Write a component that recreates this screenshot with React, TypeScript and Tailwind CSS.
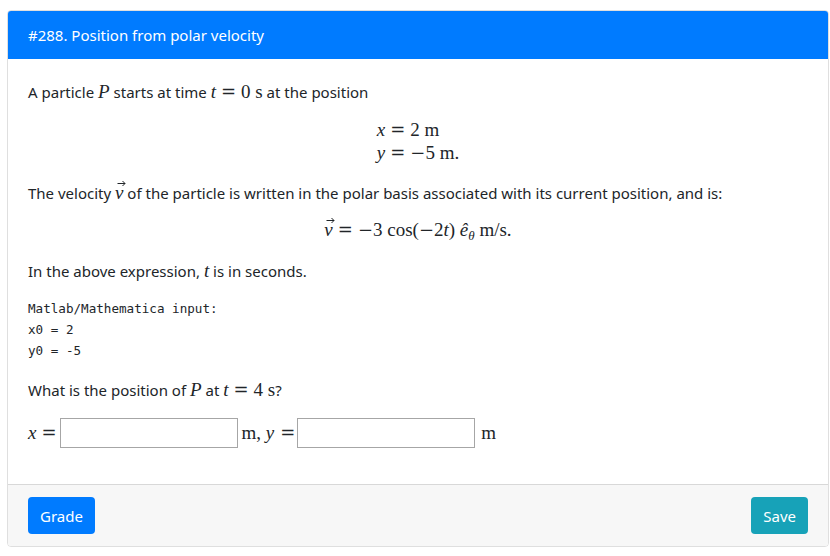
import React from 'react';

// math helpers, KaTeX-ish look with a serif face
const Math: React.FC<{ children: React.ReactNode; className?: string }> = ({ children, className = '' }) => (
  <span className={`font-['Liberation_Serif',serif] text-[19px] whitespace-nowrap ${className}`}>{children}</span>
);

const V: React.FC<{ children: React.ReactNode }> = ({ children }) => <i className="italic">{children}</i>;

// wide KaTeX style operators
const Op: React.FC<{ children: React.ReactNode; className?: string }> = ({ children, className = '' }) => (
  <span className={`font-['DejaVu_Serif',serif] text-[18px] ${className}`}>{children}</span>
);

const Vec: React.FC<{ children: React.ReactNode }> = ({ children }) => (
  <span className="relative inline-block">
    <i>{children}</i>
    <svg className="absolute left-[2px] top-[-1px] w-[9px] h-[6px]" viewBox="0 0 9 6" fill="none" stroke="#212529" strokeWidth="1">
      <path d="M0.5 3.5 L8 3.5 M5.5 1 L8 3.5 L5.5 6" />
    </svg>
  </span>
);

const Eq = () => <Op className="mx-[5px]">=</Op>;

export default function App() {
  return (
    <div className="min-h-screen bg-white pt-[10px] pl-[7px] pr-[1px] font-['Noto_Sans','Open_Sans',sans-serif] text-[#212529]">
      <div className="flex flex-col rounded-[4px] border border-black/[0.125] overflow-hidden">
        {/* header */}
        <div className="bg-[#007bff] px-5 py-3 text-[15px] leading-6 text-white">#288. Position from polar velocity</div>

        {/* body */}
        <div className="px-5 pt-[21px] pb-5 text-[15px] leading-6">
          <p className="mb-4 h-6">
            A particle <Math><V>P</V></Math> starts at time <Math><V>t</V><Eq />0 s</Math> at the position
          </p>

          <div className="mt-[-2px] mb-[17px] flex justify-center">
            <div className="grid grid-cols-[auto_auto] grid-rows-[23px_23px] items-center">
              <Math className="text-right"><V>x</V></Math>
              <Math><Eq />2 m</Math>
              <Math className="text-right"><V>y</V></Math>
              <Math><Eq /><Op>−</Op>5 m.</Math>
            </div>
          </div>

          <p className="mb-[14px] h-6">
            The velocity <Math><Vec>v</Vec></Math> of the particle is written in the polar basis associated with its current position, and is:
          </p>

          <div className="mb-4 flex h-6 items-center justify-center">
            <Math>
              <Vec>v</Vec><Eq /><Op>−</Op>3 cos(<Op>−</Op>2<V>t</V>) <V>ê</V><span className="text-[13px] italic relative top-[4px]">θ</span> m/s.
            </Math>
          </div>

          <p className="mb-[15px] h-6">
            In the above expression, <Math><V>t</V></Math> is in seconds.
          </p>

          <pre className="mb-[17px] font-['DejaVu_Sans_Mono','Liberation_Mono',monospace] text-[12.6px] leading-[21px] text-[#212529]">
            {'Matlab/Mathematica input:\nx0 = 2\ny0 = -5'}
          </pre>

          <p className="mb-4 h-6">
            What is the position of <Math><V>P</V></Math> at <Math><V>t</V><Eq />4 s</Math>?
          </p>

          <div className="mb-4 flex h-[30px] items-center">
            <Math><V>x</V><Op className="ml-[5px] mr-[3px]">=</Op></Math>
            <input className="h-[30px] w-[178px] border border-[#a6a6a6] bg-white" />
            <Math className="ml-[4px] mr-[2px]">m, <V>y</V><Op className="ml-[6px]">=</Op></Math>
            <input className="h-[30px] w-[178px] border border-[#a6a6a6] bg-white" />
            <Math className="ml-[6px]">m</Math>
          </div>
        </div>

        {/* footer */}
        <div className="flex justify-between border-t border-black/[0.125] bg-[#f7f7f7] px-5 py-3">
          <button className="h-[37px] rounded-[4px] bg-[#007bff] px-3 text-[15px] leading-6 text-white">Grade</button>
          <button className="h-[37px] rounded-[4px] bg-[#17a2b8] px-3 text-[15px] leading-6 text-white">Save</button>
        </div>
      </div>
    </div>
  );
}
